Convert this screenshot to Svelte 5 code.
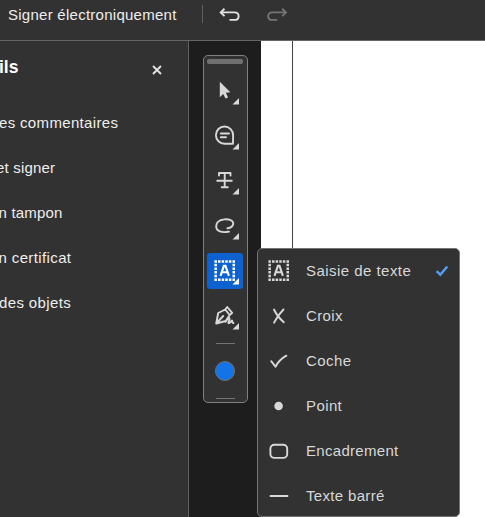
<script>
  const links = [
    { label: 'es commentaires', shift: -1, spacing: 0.34 },
    { label: 'et signer', shift: -4, spacing: 0.18 },
    { label: 'n tampon', shift: -1.5, spacing: 0.2 },
    { label: 'n certificat', shift: -1.5, spacing: 0.38 },
    { label: 'des objets', shift: -1, spacing: 0.38 }
  ];
  const tools = ['select', 'comment', 'strike', 'lasso', 'text', 'sign'];
  const choices = [
    { icon: 'text', label: 'Saisie de texte', checked: true, spacing: 0.46 },
    { icon: 'cross', label: 'Croix', spacing: 0.38 },
    { icon: 'check', label: 'Coche', spacing: 0.45 },
    { icon: 'dot', label: 'Point', spacing: 0.4 },
    { icon: 'box', label: 'Encadrement', spacing: 0.3 },
    { icon: 'line', label: 'Texte barré', spacing: 0.33 }
  ];
</script>

{#snippet textBox()}
  <g stroke-width="2.5" stroke-dasharray="2.5 1.12" fill="none">
    <path d="M7.4 8.4H28M7.4 26.7H28" />
    <path d="M8.65 10.8V25.2M26.75 10.8V25.2" />
  </g>
  <path d="M13.5 22.8L16.9 12.8H18.5L21.9 22.8M15 19.3H20.5" fill="none" stroke-width="2.1" />
{/snippet}

<div class="app">
  <header>
    <span class="title">Signer électroniquement</span>
    <i class="divider"></i>
    <svg class="history" width="22" height="18" viewBox="0 0 22 18"><path d="M5.5 0.7L1.7 4.4L5.5 8.1M2.2 4.4H15.5C21 4.4 21 11.9 15.5 11.9H10.5" /></svg>
    <svg class="history redo" width="22" height="18" viewBox="0 0 22 18"><path d="M16.2 0.7L20 4.4L16.2 8.1M19.5 4.4H6.3C0.8 4.4 0.8 11.9 6.3 11.9H11.2" /></svg>
  </header>
  <main>
    <aside>
      <div class="heading">
        <h1>ils</h1>
        <svg width="10" height="10" viewBox="0 0 10 10"><path d="M1 1L9 9M9 1L1 9" /></svg>
      </div>
      <nav>
        {#each links as link}
          <div class="link" style:margin-left="{link.shift}px" style:letter-spacing="{link.spacing}px">{link.label}</div>
        {/each}
      </nav>
    </aside>
    <section class="rail">
      <div class="toolbar">
        <i class="handle"></i>
        {#each tools as tool}
          <button class:active={tool === 'text'} aria-label={tool}>
            <svg width="36" height="36" viewBox="0 0 36 36">
              {#if tool === 'select'}
                <path class="solid" d="M12.8 8.7V24.2L16.2 20.9L18.5 25.6L21.1 24.4L18.9 19.8L23.3 19.3Z" />
              {:else if tool === 'comment'}
                <path class="stroke" d="M26 25.7H17.6A8.6 8.6 0 1 1 26.1 17.2Z M13.8 15.5H22M13.8 19.2H19" />
              {:else if tool === 'strike'}
                <path class="stroke" d="M12 12.5V10H23.5V12.5M17.7 10V24.3M10.2 17.8H24.8M14.7 24.3H20.8" />
              {:else if tool === 'lasso'}
                <path class="stroke" d="M20.5 20.3C24 20 26.8 17.5 26.2 14.7C25 9.5 9.5 10 9.2 18C9 23.5 15 25 22 23.6" />
              {:else if tool === 'text'}
                {@render textBox()}
              {:else}
                <path class="stroke" d="M9.2 25.5L11.2 15L18.2 11.5L22.7 17L18.7 23L9.2 25.5L16.2 18M18.2 11.5L20.2 9L25.2 14.8L22.7 17M18.5 23.7C20 21 22 19.5 22.5 20.2C23.2 21.2 20.5 25.2 21.7 25.3C23 25.4 24.5 22 25.2 22.7C25.8 23.5 24.6 25 26.5 25" />
              {/if}
              <path class="solid" d="M32 25V31.5H25.5Z" />
            </svg>
          </button>
        {/each}
        <i class="rule"></i>
        <i class="colour"></i>
        <i class="rule"></i>
      </div>
    </section>
    <section class="page"></section>
  </main>

  <div class="menu">
    {#each choices as choice}
      <div class="choice">
        <svg width="36" height="36" viewBox="0 0 36 36">
          {#if choice.icon === 'text'}
            {@render textBox()}
          {:else if choice.icon === 'cross'}
            <path class="stroke" d="M13 11.5C15 16 18.5 20.5 22.8 24.2M22.5 11.5C19 15 15.5 19.5 13.1 24.7" />
          {:else if choice.icon === 'check'}
            <path class="stroke" d="M10.2 18.2L14.5 23.7C16.7 19.5 20.7 15.3 25.4 12.7" />
          {:else if choice.icon === 'dot'}
            <circle class="solid" cx="17.6" cy="18" r="4.3" />
          {:else if choice.icon === 'box'}
            <rect class="stroke" x="9.4" y="11.7" width="16.8" height="13.2" rx="4" />
          {:else}
            <path class="stroke" d="M9.5 18H26.5" />
          {/if}
        </svg>
        <span style:letter-spacing="{choice.spacing}px">{choice.label}</span>
        {#if choice.checked}
          <svg class="tick" width="14" height="12" viewBox="0 0 14 12"><path d="M1.6 6.2L5.3 9.7L12.3 1.5" /></svg>
        {/if}
      </div>
    {/each}
  </div>
</div>

<style>
  :global(body) { margin: 0; }
  .app {
    position: relative;
    display: flex;
    flex-direction: column;
    width: 485px;
    height: 517px;
    overflow: hidden;
    background: #323232;
    color: #eee;
    font: 15px/20px "Liberation Sans", Arial, sans-serif;
  }
  i { display: block; }
  svg { display: block; flex: none; fill: none; stroke: #d8d8d8; }
  header {
    box-sizing: border-box;
    flex: none;
    display: flex;
    height: 41px;
    padding: 5px 0 0 8px;
    border-bottom: 1px solid #666;
  }
  .title { width: 194px; white-space: nowrap; letter-spacing: 0.26px; }
  .divider { width: 1px; height: 18px; background: #606060; }
  .history { margin: 3px 0 0 16px; stroke: #e2e2e2; stroke-width: 1.9; }
  .redo { margin-left: 25px; stroke: #757575; }
  main { flex: 1; display: flex; }
  aside {
    box-sizing: border-box;
    width: 189px;
    border-right: 1px solid #626262;
    overflow: hidden;
  }
  .heading {
    display: flex;
    justify-content: space-between;
    padding: 15px 26px 0 0;
    height: 44px;
  }
  h1 { margin: 0 0 0 -1px; font-size: 17.5px; line-height: 22px; color: #fff; }
  .heading svg { margin-top: 9px; stroke: #e2e2e2; stroke-width: 1.9; }
  .link { height: 45px; line-height: 45px; white-space: nowrap; }
  .rail {
    box-sizing: border-box;
    width: 72px;
    padding: 14px 0 0 14px;
    background: #1d1d1d;
  }
  .toolbar {
    box-sizing: border-box;
    display: flex;
    flex-direction: column;
    align-items: flex-start;
    width: 45px;
    height: 348px;
    padding-left: 3px;
    border: 1px solid #808080;
    border-radius: 5px;
    background: #323232;
  }
  .handle {
    width: 36px;
    height: 5px;
    margin: 3px 0 9px;
    border-radius: 2px;
    background: #707070;
  }
  button {
    width: 36px;
    height: 36px;
    margin: 0 0 9px;
    padding: 0;
    border: 0;
    border-radius: 3px;
    background: none;
  }
  .active { background: #0d62cf; }
  .active svg { stroke: #fff; }
  .solid { fill: #d8d8d8; stroke: none; }
  .active .solid { fill: #fff; }
  .stroke { stroke-width: 1.9; stroke-linecap: round; stroke-linejoin: round; }
  .rule { width: 19px; height: 1px; margin-left: 9px; background: #747474; }
  .colour {
    box-sizing: border-box;
    width: 20px;
    height: 20px;
    margin: 17px 0 17px 8px;
    border: 1.5px solid #707070;
    border-radius: 50%;
    background: #1473e6;
  }
  .page {
    flex: 1;
    background: linear-gradient(#444, #444) 31px 0 / 1px 100% no-repeat #fff;
  }
  .menu {
    position: absolute;
    left: 257px;
    top: 248px;
    box-sizing: border-box;
    width: 203px;
    height: 269px;
    border: 1px solid #747474;
    border-radius: 5px;
    background: #323232;
    color: #d8d8d8;
  }
  .choice {
    display: flex;
    align-items: center;
    height: 45px;
    padding: 0 10px 0 3px;
  }
  .choice:first-child { height: 44px; }
  .choice span { flex: 1; margin-left: 9px; white-space: nowrap; }
  .tick { stroke: #549ff0; stroke-width: 2.5; }
</style>
